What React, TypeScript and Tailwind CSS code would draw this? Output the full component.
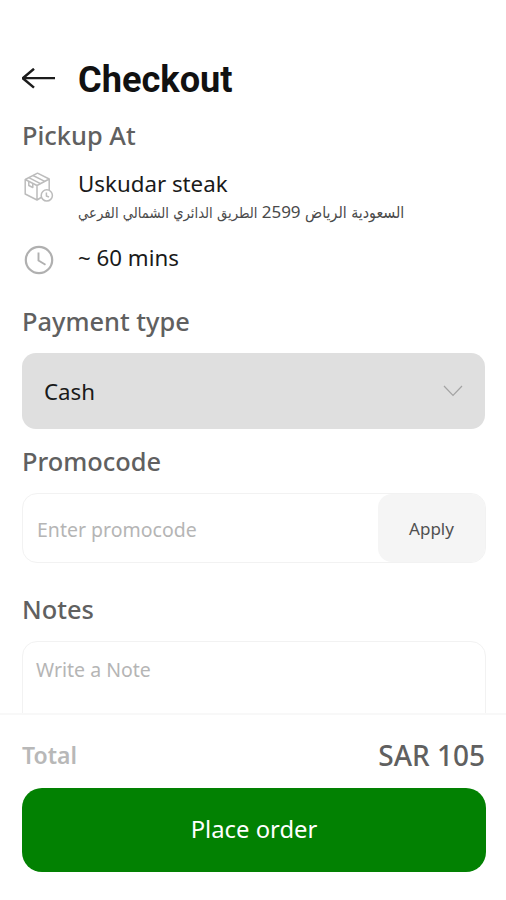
import { ReactNode } from "react";

function BackIcon() {
  return (
    <svg width="34" height="22" viewBox="0 0 34 22" fill="none" stroke="#1c1c1c" strokeWidth="2.3">
      <path d="M33 10.2H0.8" />
      <path d="M12 0.8L0.8 10.2L12 19.6" strokeLinejoin="round" strokeWidth="2.5" />
    </svg>
  );
}

function PackageIcon() {
  return (
    <svg width="30" height="31" viewBox="0 0 30 31" fill="none" stroke="#bcbcbc" strokeWidth="1.5" strokeLinejoin="round">
      <path d="M1.2 7.5L13.5 1.2L25.2 7V20.5L13 28L1.2 22V7.5L13 13.5L25.2 7M13 13.5V28" />
      <path d="M4.8 5.7L16.5 11.6M9 3.5L20.8 9.3M4.8 9.5V13.5L8.8 15.5V11.5" />
      <circle cx="22.8" cy="23.4" r="5.6" fill="#fff" />
      <path d="M22.4 20.5V24L25 25" />
    </svg>
  );
}

function ClockIcon() {
  return (
    <svg width="30" height="30" viewBox="0 0 30 30" fill="none" stroke="#b0b0b0">
      <circle cx="15" cy="15" r="13.2" strokeWidth="2.2" />
      <path d="M14.5 7.5V15.5L21.5 19.8" strokeWidth="1.9" />
    </svg>
  );
}

function ChevronIcon() {
  return (
    <svg width="20" height="12" viewBox="0 0 20 12" fill="none" stroke="#a3a3a3" strokeWidth="1.2">
      <path d="M1 1L10 10.5L19 1" />
    </svg>
  );
}

function Heading({ children }: { children: ReactNode }) {
  return <h2 className="text-[25.4px] leading-[31px] font-medium text-[#606060]">{children}</h2>;
}

export default function App() {
  return (
    <div className="flex h-[900px] w-[506px] flex-col bg-white font-['Noto_Sans','DejaVu_Sans',sans-serif] text-[#1a1a1a]">
      <main className="min-h-0 flex-1 overflow-hidden px-[22px] pt-[58px]">
        {/* HEADER */}
        <header className="flex h-[42px] items-center gap-[22px]">
          <BackIcon />
          <h1 className="pt-0.5 font-['Roboto',sans-serif] text-[36.2px] leading-[42px] font-bold text-[#111]">
            Checkout
          </h1>
        </header>

        {/* PICKUP */}
        <section className="pt-5">
          <Heading>Pickup At</Heading>
          <div className="flex h-[72px] gap-6 pt-[17px] pl-0.5">
            <div className="pt-1">
              <PackageIcon />
            </div>
            <div>
              <p className="text-[22.3px] leading-8">Uskudar steak</p>
              <p
                dir="rtl"
                className="font-['DejaVu_Sans_Condensed','DejaVu_Sans',sans-serif] text-[14.7px] leading-6 whitespace-nowrap text-[#4a4a4a]"
              >
                <span className="text-[15.8px]">السعودية الرياض </span>
                <span className="font-['Noto_Sans'] text-[17px]">2599</span> الطريق الدائري الشمالي الفرعي
              </p>
            </div>
          </div>
          <div className="flex h-[62px] gap-6 pt-[19px] pl-0.5">
            <div className="pt-[3px]">
              <ClockIcon />
            </div>
            <p className="text-[22.3px] leading-8">~ 60 mins</p>
          </div>
        </section>

        {/* PAYMENT */}
        <section className="pt-[21px]">
          <Heading>Payment type</Heading>
          <button className="mt-4 flex h-[76px] w-[463px] items-center justify-between rounded-[14px] bg-[#dfdfdf] pr-[22px] pl-[22px]">
            <span className="pt-0.5 text-[22.3px] leading-8">Cash</span>
            <ChevronIcon />
          </button>
        </section>

        {/* PROMOCODE */}
        <section className="pt-[17px]">
          <Heading>Promocode</Heading>
          <div className="mt-4 flex h-[70px] w-[464px] rounded-[15px] border border-[#f2f2f2]">
            <input
              placeholder="Enter promocode"
              className="min-w-0 flex-1 pt-[3px] pl-3.5 text-[19.5px] outline-none placeholder:text-[#b5b5b5]"
            />
            <button className="w-[107px] rounded-[14px] bg-[#f5f5f5] pt-0.5 text-[17px] text-[#505050]">Apply</button>
          </div>
        </section>

        {/* NOTES */}
        <section className="pt-[31px]">
          <Heading>Notes</Heading>
          <textarea
            placeholder="Write a Note"
            className="mt-4 block h-[140px] w-[464px] resize-none rounded-[15px] border border-[#f2f2f2] px-[13px] pt-3 text-[19.5px] leading-8 outline-none placeholder:text-[#b5b5b5]"
          />
        </section>
      </main>

      {/* TOTAL */}
      <footer className="h-[187px] border-t-2 border-[#f8f8f8] px-[22px] pt-5">
        <div className="flex h-10 w-[463px] items-center justify-between">
          <span className="text-[23px] font-semibold text-[#b8b8b8]">Total</span>
          <span className="text-[28px] font-medium text-[#606060]">SAR 105</span>
        </div>
        <button className="mt-[13px] h-[84px] w-[464px] rounded-[20px] bg-[#028102] text-[23.8px] text-white">
          Place order
        </button>
      </footer>
    </div>
  );
}
